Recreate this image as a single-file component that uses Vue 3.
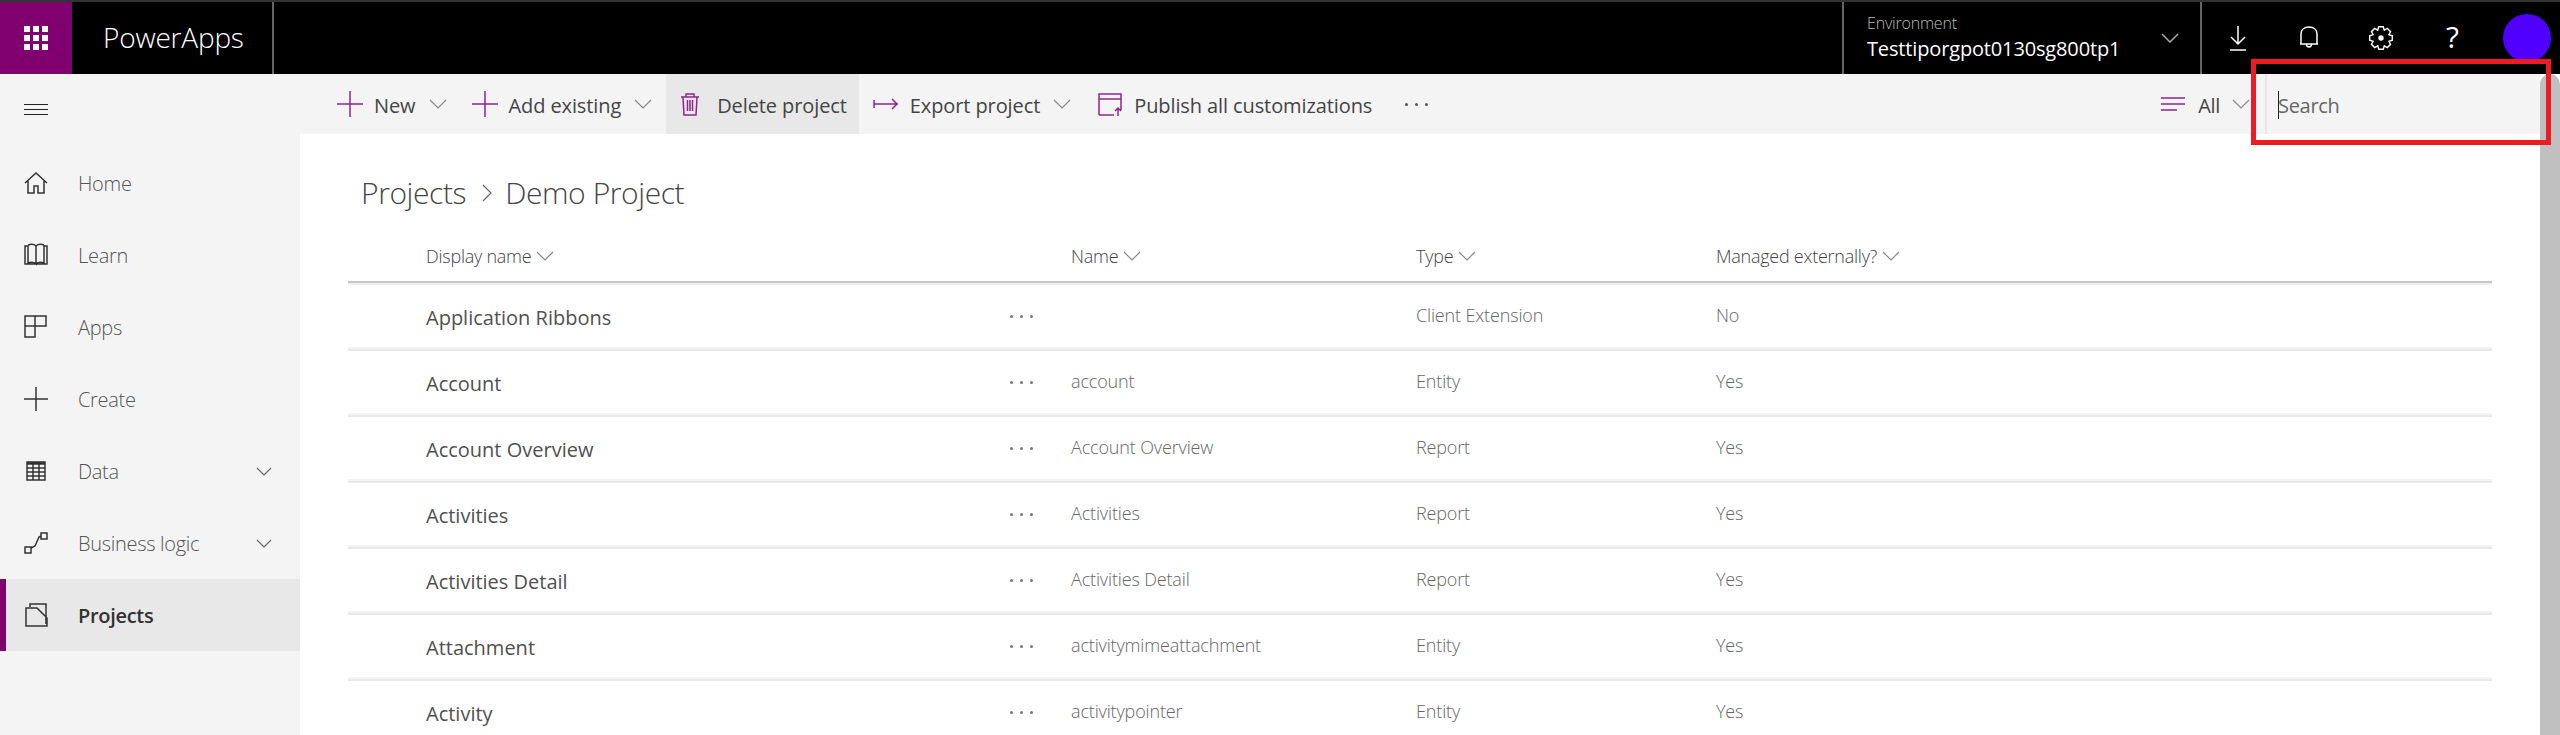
<template>
  <div class="app">
    <header class="topbar">
      <div class="waffle">
        <span v-for="n in 9" :key="n"></span>
      </div>
      <div class="brand">PowerApps</div>
      <div class="env">
        <div class="env-text">
          <div class="env-label">Environment</div>
          <div class="env-name">Testtiporgpot0130sg800tp1</div>
        </div>
        <svg class="env-chev" width="18" height="10" viewBox="0 0 18 10"><path d="M1 1l8 8 8-8" /></svg>
      </div>
      <div class="top-icons">
        <svg width="16" height="25" viewBox="0 0 16 25"><path d="M8 0v18M1 11l7 7 7-7M0 24h16" /></svg>
        <svg class="bell" width="18" height="22" viewBox="0 0 18 22"><path d="M1 18V8c0-4 3-7 8-7s8 3 8 7v10zM0 18h18M6.5 18c0 4 5 4 5 0" /></svg>
        <svg class="gear" width="24" height="24" viewBox="0 0 24 24"><path :d="gearPath" /><circle cx="12" cy="12" r="2" fill="#fff" /></svg>
        <span class="help">?</span>
        <div class="avatar"></div>
      </div>
    </header>

    <div class="body">
      <aside class="sidebar">
        <div class="hamburger"><span></span><span></span><span></span></div>
        <nav>
          <div v-for="item in navItems" :key="item.label" class="nav-item" :class="{ active: item.active }">
            <svg class="nav-icon" width="24" height="24" viewBox="0 0 24 24"><path :d="item.icon" /></svg>
            <span class="nav-label">{{ item.label }}</span>
            <svg v-if="item.expand" class="nav-chev" width="16" height="9" viewBox="0 0 16 9"><path d="M1 1l7 7 7-7" /></svg>
          </div>
        </nav>
      </aside>

      <main class="main">
        <div class="cmdbar">
          <div v-for="cmd in commands" :key="cmd.label" class="cmd" :class="{ hover: cmd.hover }" :style="{ marginRight: cmd.gap + 'px' }">
            <svg class="cmd-icon" width="26" height="26" viewBox="0 0 26 26"><path :d="cmd.icon" /></svg>
            <span>{{ cmd.label }}</span>
            <svg v-if="cmd.drop" class="chev" width="18" height="10" viewBox="0 0 18 10"><path d="M1 1l8 8 8-8" /></svg>
          </div>
          <div class="cmd-more"><i></i><i></i><i></i></div>
          <div class="filter">
            <svg width="26" height="16" viewBox="0 0 26 16"><path d="M1 2h24M1 8h24M1 14h16" /></svg>
            <span>All</span>
            <svg class="chev" width="18" height="10" viewBox="0 0 18 10"><path d="M1 1l8 8 8-8" /></svg>
          </div>
          <div class="search"><span class="caret"></span><span>Search</span></div>
        </div>

        <section class="content">
          <div class="crumb">
            <span>Projects</span>
            <svg class="crumb-sep" width="10" height="18" viewBox="0 0 10 18"><path d="M1 1l8 8-8 8" /></svg>
            <span>Demo Project</span>
          </div>

          <div class="grid head">
            <div></div>
            <div class="th">Display name <svg class="chev" width="18" height="10" viewBox="0 0 18 10"><path d="M1 1l8 8 8-8" /></svg></div>
            <div></div>
            <div class="th">Name <svg class="chev" width="18" height="10" viewBox="0 0 18 10"><path d="M1 1l8 8 8-8" /></svg></div>
            <div class="th">Type <svg class="chev" width="18" height="10" viewBox="0 0 18 10"><path d="M1 1l8 8 8-8" /></svg></div>
            <div class="th">Managed externally? <svg class="chev" width="18" height="10" viewBox="0 0 18 10"><path d="M1 1l8 8 8-8" /></svg></div>
          </div>

          <div v-for="row in rows" :key="row.display" class="grid row">
            <div></div>
            <div class="display">{{ row.display }}</div>
            <div class="dots"><i></i><i></i><i></i></div>
            <div class="cell">{{ row.name }}</div>
            <div class="cell">{{ row.type }}</div>
            <div class="cell">{{ row.managed }}</div>
          </div>
        </section>
      </main>

      <div class="scrollbar"></div>
    </div>

    <!-- annotation drawn over the screenshot -->
    <div class="highlight"></div>
  </div>
</template>

<script setup>
const navItems = [
  { label: 'Home', icon: 'M1 12L12 2l11 10M4 10v12h6v-7h4v7h6V10' },
  { label: 'Learn', icon: 'M1 3h3v18H1zM4 2c3-1 6-1 8 1v18c-2-2-5-2-8-1M20 2c-3-1-6-1-8 1M20 2v18c-3-1-6-1-8 1M20 3h3v18H1' },
  { label: 'Apps', icon: 'M1 1h10v10H1zM11 1h11v10H11zM1 11h10v11H1z' },
  { label: 'Create', icon: 'M0 12h24M12 0v24' },
  { label: 'Data', expand: true, icon: 'M3 3h18v18H3zM3 4h18M3 5h18M3 9h18M3 13h18M3 17h18M9 5v16M15 5v16' },
  { label: 'Business logic', expand: true, icon: 'M1 16h6v6H1zM7 17l4-2 4-9 2-1M17 2h6v6h-6z' },
  { label: 'Projects', active: true, icon: 'M6 4V1h16v20M2 5h11l10 10v8H2z' }
]

const commands = [
  { label: 'New', drop: true, gap: 25, icon: 'M0 13h26M13 0v26' },
  { label: 'Add existing', drop: true, gap: 14, icon: 'M0 13h26M13 0v26' },
  { label: 'Delete project', hover: true, gap: 14, icon: 'M4 6h18M9 6V3h8v3M6 6l1 18h12l1-18M10.5 9v11M13 9v11M15.5 9v11' },
  { label: 'Export project', drop: true, gap: 26, icon: 'M1 9v8M1 13h24M19 8l5 5-5 5' },
  { label: 'Publish all customizations', gap: 33, icon: 'M2 24V3h22v16M2 8h22M2 24h15M21 25v-8M18 20l3-3 3 3' }
]

// eight toothed cog outline
const gearPath = (() => {
  const pts = []
  for (let i = 0; i < 8; i++) {
    const a = (i * Math.PI) / 4
    for (const [r, d] of [[8.5, -0.39], [11.5, -0.2], [11.5, 0.2], [8.5, 0.39]]) {
      pts.push(`${(12 + r * Math.cos(a + d)).toFixed(2)} ${(12 + r * Math.sin(a + d)).toFixed(2)}`)
    }
  }
  return 'M' + pts.join('L') + 'Z'
})()

const rows = [
  { display: 'Application Ribbons', name: '', type: 'Client Extension', managed: 'No' },
  { display: 'Account', name: 'account', type: 'Entity', managed: 'Yes' },
  { display: 'Account Overview', name: 'Account Overview', type: 'Report', managed: 'Yes' },
  { display: 'Activities', name: 'Activities', type: 'Report', managed: 'Yes' },
  { display: 'Activities Detail', name: 'Activities Detail', type: 'Report', managed: 'Yes' },
  { display: 'Attachment', name: 'activitymimeattachment', type: 'Entity', managed: 'Yes' },
  { display: 'Activity', name: 'activitypointer', type: 'Entity', managed: 'Yes' }
]
</script>

<style>
html,
body {
  margin: 0;
  background: #fff;
}
</style>

<style scoped>
.app {
  position: relative;
  width: 2560px;
  height: 735px;
  overflow: hidden;
  font-family: "Open Sans", "Noto Sans", sans-serif;
  color: #333;
}

svg {
  display: block;
  flex: none;
  fill: none;
  stroke: currentColor;
  stroke-width: 1.5;
}

/* top bar */
.topbar {
  display: flex;
  height: 72px;
  background: #000;
  border-top: 2px solid #333;
  color: #fff;
}

.waffle {
  display: grid;
  grid-template-columns: repeat(3, 6px);
  grid-auto-rows: 6px;
  gap: 3px;
  align-content: center;
  justify-content: center;
  width: 72px;
  background: #7f006e;
}

.waffle span {
  background: #fff;
}

.brand {
  width: 169px;
  padding-left: 31px;
  border-right: 2px solid #666;
  font-size: 28px;
  font-weight: 300;
  letter-spacing: -0.2px;
  line-height: 70px;
}

.env {
  display: flex;
  align-items: center;
  margin-left: 1568px;
  width: 360px;
  border-left: 2px solid #666;
  border-right: 2px solid #666;
  padding-left: 23px;
  box-sizing: border-box;
}

.env-text {
  width: 294px;
}

.env-label {
  font-size: 16px;
  font-weight: 300;
  line-height: 22px;
  color: #bbb;
  letter-spacing: -0.2px;
}

.env-name {
  font-size: 20px;
  line-height: 30px;
  letter-spacing: -0.15px;
}

.env-chev {
  color: #aaa;
}

.top-icons {
  display: flex;
  align-items: center;
  flex: 1;
  padding-left: 28px;
  gap: 53px;
}

.bell {
  margin-left: 1px;
  margin-top: -2px;
}

.gear {
  margin-left: -2px;
  stroke-width: 1.4;
}

.help {
  font-size: 30px;
  line-height: 30px;
  width: 16px;
  margin-top: -2px;
}

.avatar {
  width: 48px;
  height: 48px;
  border-radius: 50%;
  background: #5000ff;
  margin-left: -12px;
}

/* main area */
.body {
  display: flex;
  height: 661px;
}

.sidebar {
  width: 300px;
  flex: none;
  background: #f4f4f4;
}

.hamburger {
  display: flex;
  flex-direction: column;
  justify-content: center;
  gap: 4px;
  height: 60px;
  padding: 5px 0 8px 24px;
}

.hamburger span {
  width: 24px;
  height: 1px;
  background: #222;
}

.nav-item {
  display: flex;
  align-items: center;
  height: 72px;
  padding-left: 24px;
  gap: 30px;
  color: #333;
}

.nav-item.active {
  background: #e8e8e8;
  box-shadow: inset 6px 0 0 #7f006e;
}

.nav-label {
  font-size: 20px;
  font-weight: 300;
  color: #555;
  letter-spacing: -0.3px;
}

.active .nav-label {
  font-weight: 600;
  color: #333;
}

.nav-chev {
  margin-left: auto;
  margin-right: 28px;
  color: #666;
  stroke-width: 1.2;
}

.main {
  flex: 1;
  min-width: 0;
}

/* command bar */
.cmdbar {
  display: flex;
  align-items: center;
  height: 60px;
  background: #f4f4f4;
  padding-left: 37px;
  font-size: 20px;
  color: #444;
}

.cmdbar span {
  margin-top: 2px;
}

.cmd {
  display: flex;
  align-items: center;
  height: 100%;
  gap: 11px;
  letter-spacing: -0.1px;
  white-space: nowrap;
}

.cmd.hover {
  background: #e8e8e8;
  gap: 14px;
  padding: 0 12px 0 11px;
}

.cmd-icon,
.filter svg:first-child {
  color: #8e2490;
}

.chev {
  color: #888;
  stroke-width: 1.2;
}

.cmd .chev {
  margin-left: 2px;
}

.cmd-more,
.dots {
  display: flex;
  gap: 7px;
}

.cmd-more i,
.dots i {
  width: 3px;
  height: 3px;
  border-radius: 50%;
  background: #555;
}

.filter {
  display: flex;
  align-items: center;
  gap: 12px;
  margin-left: auto;
  margin-right: 15px;
  letter-spacing: -0.3px;
}

.search {
  display: flex;
  align-items: center;
  width: 275px;
  height: 100%;
  box-sizing: border-box;
  border-left: 2px solid #e6e6e6;
  padding-left: 11px;
  font-size: 20px;
  color: #666;
  letter-spacing: -0.3px;
}

.caret {
  width: 1px;
  height: 28px;
  background: #222;
  margin-right: -1px;
}

/* table */
.content {
  padding: 38px 48px 0;
}

.crumb {
  display: flex;
  align-items: center;
  height: 40px;
  padding-left: 13px;
  font-size: 30px;
  font-weight: 300;
  letter-spacing: -0.4px;
  color: #444;
  margin-bottom: 20px;
}

.crumb-sep {
  margin: 2px 13px 0 16px;
  color: #666;
  stroke-width: 1.2;
}

.grid {
  display: grid;
  grid-template-columns: 78px 584px 61px 345px 300px 1fr;
  align-items: center;
}

.head {
  height: 48px;
  padding-bottom: 3px;
  border-bottom: 2px solid #eee;
  box-shadow: inset 0 -2px 0 #c6c6c6;
}

.th {
  display: flex;
  align-items: center;
  gap: 5px;
  font-size: 18px;
  font-weight: 300;
  letter-spacing: -0.25px;
  color: #444;
  white-space: nowrap;
}

.row {
  height: 66px;
  box-sizing: border-box;
  border-bottom: 2px solid #e9e9e9;
  box-shadow: inset 0 -2px 0 #f3f3f3;
}

.display {
  font-size: 20px;
  letter-spacing: 0;
  font-weight: 400;
  color: #505050;
}

.cell {
  font-size: 18px;
  font-weight: 300;
  letter-spacing: -0.15px;
  color: #666;
  margin-bottom: 4px;
}

.dots {
  align-self: center;
  margin-bottom: 2px;
}

.dots i {
  background: #777;
}

.scrollbar {
  width: 20px;
  flex: none;
  background: #c0c0c0;
  border-radius: 10px 10px 0 0;
}

.highlight {
  position: absolute;
  left: 2251px;
  top: 59px;
  width: 300px;
  height: 86px;
  box-sizing: border-box;
  border: 5px solid #ed1c24;
}
</style>
